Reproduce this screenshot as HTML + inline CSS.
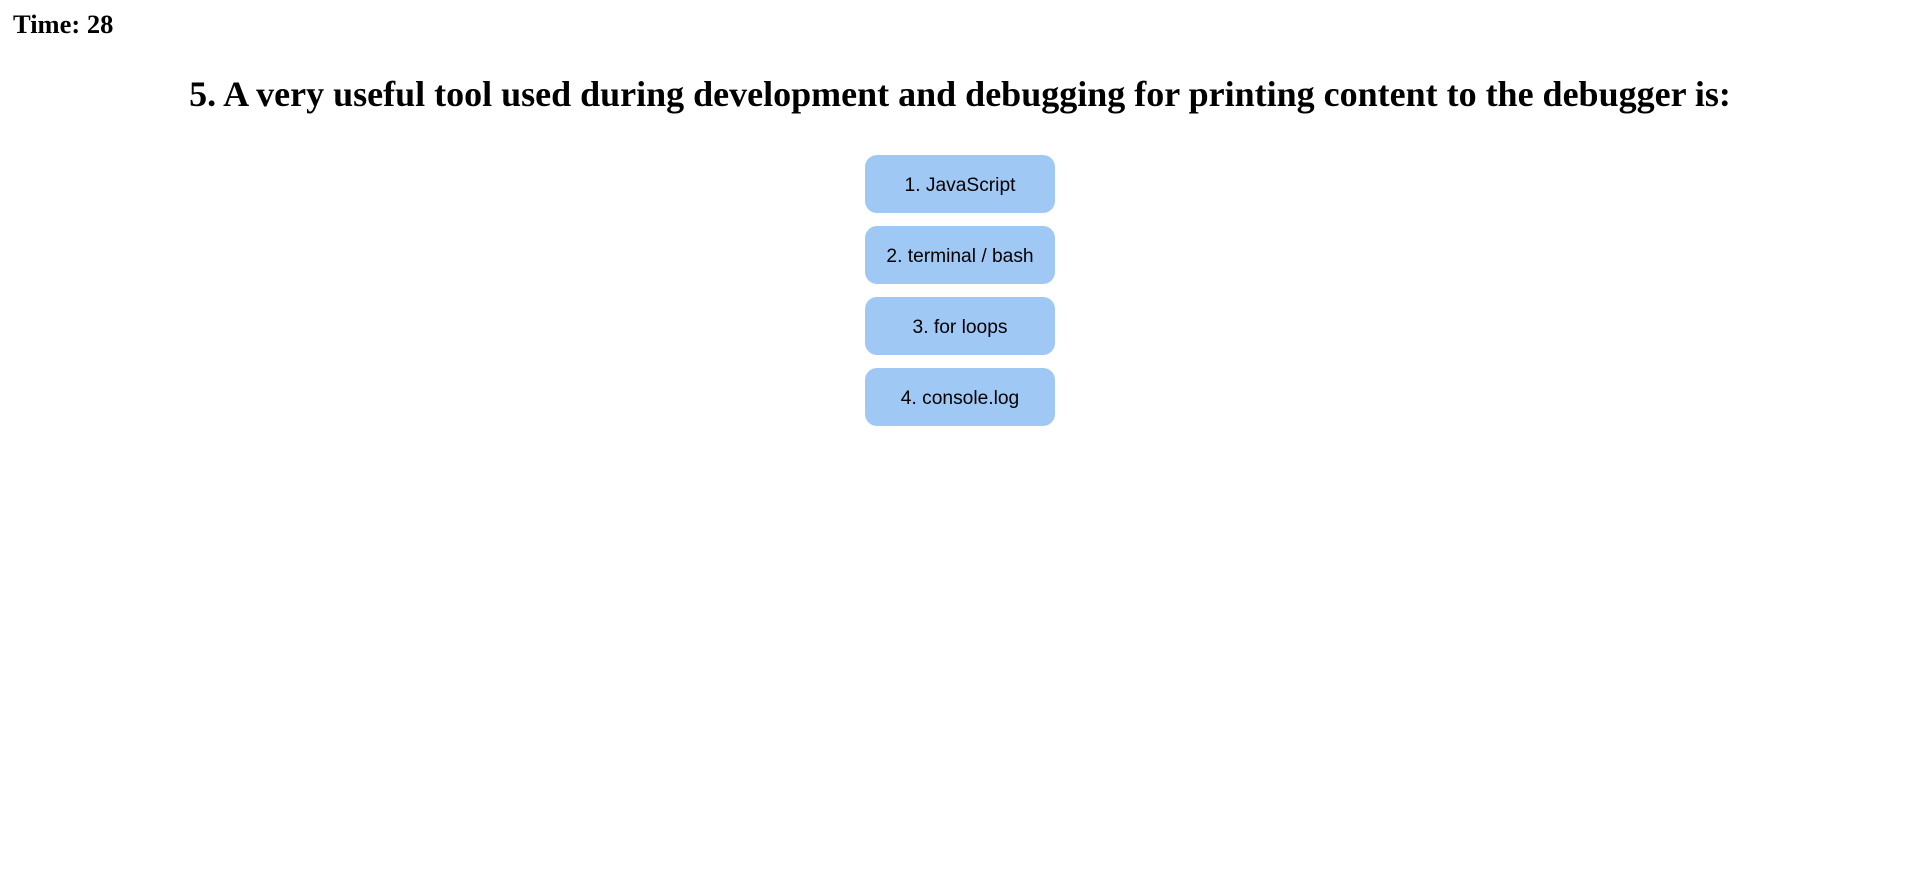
<!DOCTYPE html>
<html><head><style>
body{margin:0;background:#fff;width:1920px;height:890px;overflow:hidden;font-family:"Liberation Serif",serif;}
.time{position:absolute;left:13px;top:7px;font-size:26.5px;font-weight:bold;line-height:34px;}
h1{position:absolute;left:0;width:1920px;top:74px;margin:0;text-align:center;font-size:36px;font-weight:bold;line-height:40px;white-space:nowrap;}
.btn{position:absolute;left:865px;width:190px;height:58px;background:#a0c8f5;border-radius:12px;font-family:"Liberation Sans",sans-serif;font-size:19.2px;line-height:62px;text-align:center;color:#000;}
</style></head><body>
<div class="time">Time: 28</div>
<h1>5. A very useful tool used during development and debugging for printing content to the debugger is:</h1>
<div class="btn" style="top:155px">1. JavaScript</div>
<div class="btn" style="top:226px">2. terminal / bash</div>
<div class="btn" style="top:297px">3. for loops</div>
<div class="btn" style="top:368px">4. console.log</div>
</body></html>
